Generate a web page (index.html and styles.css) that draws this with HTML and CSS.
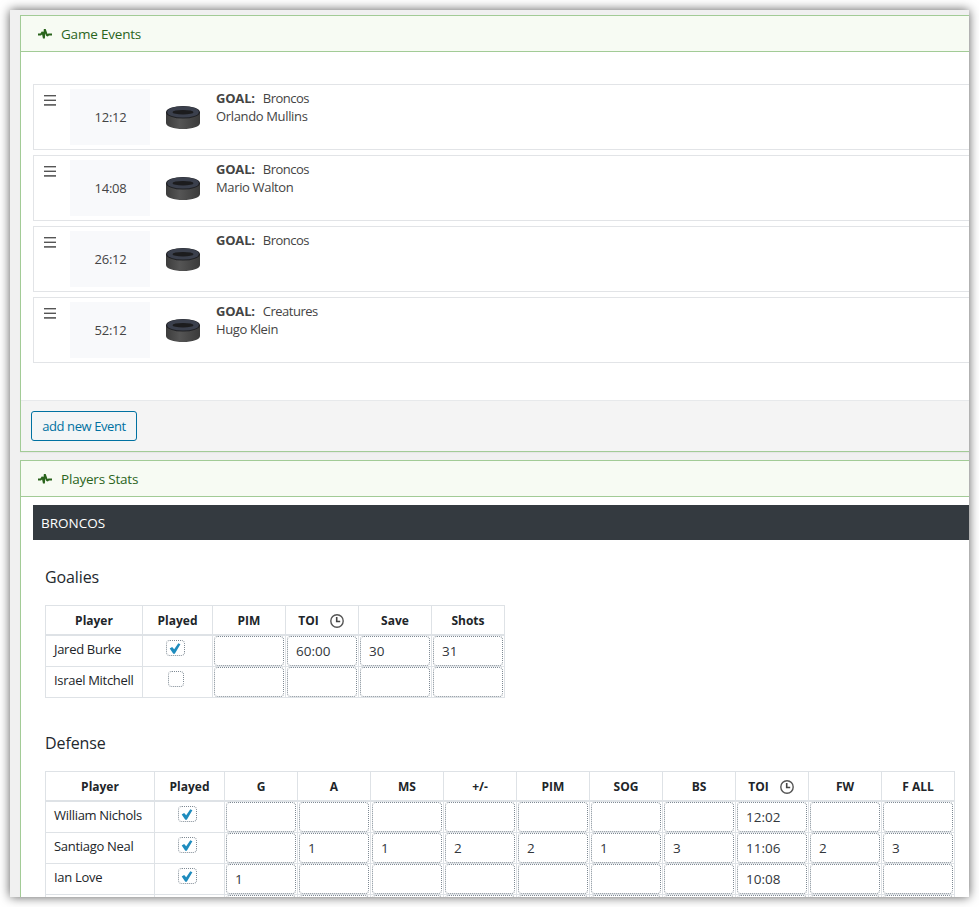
FILE: index.html
```html
<!DOCTYPE html>
<html lang="en">
<head>
<meta charset="utf-8">
<title>Game Events</title>
<link rel="stylesheet" href="styles.css">
</head>
<body>
<svg width="0" height="0" class="defs">
  <defs>
    <linearGradient id="puckSide" x1="0" x2="1" y1="0" y2="0"><stop offset="0" stop-color="#3c3c3c"/><stop offset=".4" stop-color="#555"/><stop offset="1" stop-color="#3a3a3a"/></linearGradient>
    <symbol id="pulse" viewBox="0 0 14 12"><path d="M0 6.500h2.800L4.500 4l1.400 6.300L6.800 1.200l2.400 6.600 1.400-1.300H14" fill="none" stroke="#2a641c" stroke-width="1.900" stroke-linejoin="bevel"/></symbol>
    <symbol id="puck" viewBox="0 0 34 23"><path d="M0 6v11c0 3.500 7.500 6 17 6s17-2.500 17-6V6z" fill="url(#puckSide)"/><ellipse cx="17" cy="6.300" rx="17" ry="6.300" fill="#202124"/><ellipse cx="17" cy="5.900" rx="15.800" ry="5.700" fill="#3b404d"/><ellipse cx="17" cy="6.200" rx="10.500" ry="2.300" fill="#1c1c1e"/></symbol>
    <symbol id="clock" viewBox="0 0 14 14"><circle cx="7" cy="7" r="6.200" fill="none" stroke="#555" stroke-width="1.400"/><path d="M6.700 3v4.500H10.200" fill="none" stroke="#444" stroke-width="1.600"/></symbol>
    <symbol id="check" viewBox="0 0 12 11"><path d="M.7 5.600l2.400-1.700 2.100 2.400L9.300.2l2.100 1.100-5.600 9.400H4.300z" fill="#1e8cbe"/></symbol>
  </defs>
</svg>
<main class="frame">
  <section class="panel events-panel">
    <h2 class="panel-head"><svg class="pulse"><use href="#pulse"/></svg><span>Game Events</span></h2>
    <div class="events" id="events"></div>
    <footer class="panel-foot"><button class="add">add new Event</button></footer>
  </section>
  <section class="panel">
    <h2 class="panel-head"><svg class="pulse"><use href="#pulse"/></svg><span>Players Stats</span></h2>
    <div class="team"><span>BRONCOS</span></div>
    <div class="stats" id="stats"></div>
  </section>
</main>
<script src="app.js"></script>
</body>
</html>
```
FILE: styles.css
```css
* { box-sizing: border-box; }
body { margin: 0; padding: 10px; height: 907px; overflow: hidden; background: #fff; font: 13px/18px "Open Sans", "Noto Sans", sans-serif; color: #444; }
.defs { position: absolute; }
.frame { width: 959px; height: 887px; padding: 5px 0 0 10px; overflow: hidden; background: #f0f0f0; box-shadow: 0 0 10px rgba(0, 0, 0, .65); }
.panel { border: 1px solid #a2cb96; border-right: 0; background: #fff; margin-bottom: 8px; box-shadow: 0 1px 1px rgba(0, 0, 0, .04); }
.events-panel { height: 437px; display: flex; flex-direction: column; }
.panel-head { margin: 0; height: 36px; flex: none; display: flex; align-items: center; gap: 9px; padding-left: 17px; background: #f7fbf3; border-bottom: 1px solid #a2cb96; font-size: 13.500px; font-weight: 400; color: #2a641c; }
.panel-head span { letter-spacing: -.2px; }
.pulse { width: 14px; height: 12px; }
.events { flex: 1; padding: 32px 0 0 12px; display: flex; flex-direction: column; gap: 5px; }
.event { height: 66px; border: 1px solid #e2e4e7; border-right: 0; display: flex; padding: 4px 0 0 10px; }
.grip { width: 12px; height: 11px; margin: 6px 14px 0 0; background: linear-gradient(#555 0 1px, #bbb 1px 2px, transparent 2px 4px, #bbb 4px 5px, #555 5px 6px, transparent 6px 9px, #666 9px 10px, #888 10px); }
.time { width: 80px; height: 56px; background: #f8f9fb; display: flex; align-items: center; justify-content: center; letter-spacing: -.2px; padding: 0 0 1px 1px; }
.puck { width: 34px; height: 23px; margin: 17px 17px 0 16px; }
.goal { margin-left: -1px; letter-spacing: -.35px; }
.goal b { margin-right: 8px; letter-spacing: -.2px; }
.goal .team-name { letter-spacing: -.5px; }
.panel-foot { height: 51px; border-top: 1px solid #e7e9eb; background: #f4f4f4; padding: 10px; }
.add { display: block; width: 106px; height: 30px; padding: 0; border: 1px solid #0071a1; border-radius: 3px; background: #f3f5f6; color: #0071a1; font: inherit; letter-spacing: -.4px; }
.team { height: 35px; margin: 8px 0 0 12px; padding: 0 8px; background: #343a40; color: #fff; display: flex; align-items: center; font-size: 13.500px; }
.stats { padding: 0 0 0 24px; }
.stats h3 { margin: 0; font-size: 16px; font-weight: 500; letter-spacing: -.1px; line-height: 20px; color: #23282d; padding-top: 27px; height: 65px; }
.grid { display: grid; width: max-content; border-left: 1px solid #dee2e6; border-top: 1px solid #dee2e6; margin-bottom: 8px; color: #212529; }
.grid > div { border-right: 1px solid #dee2e6; border-bottom: 1px solid #dee2e6; height: 31px; display: flex; }
.grid > .th { height: 30px; border-bottom-width: 2px; align-items: center; justify-content: center; font-size: 12px; font-weight: 700; gap: 12px; padding-top: 2px; }
.clock { width: 14px; height: 14px; margin-right: 2px; margin-left: -1px; }
.name { padding: 4px 0 0 8px; white-space: nowrap; letter-spacing: -.3px; }
.input { width: 70px; height: 30px; margin-left: 1px; border: 1px dotted #7e8993; border-radius: 4px; padding: 5px 8px 0; font-size: 13.500px; color: #32373c; }
.box { width: 16px; height: 16px; margin: 4px 0 0 25px; border: 1px dotted #7e8993; border-radius: 4px; }
.box.on { width: 19px; margin-left: 23px; padding: 2px 0 0 2px; }
.box svg { display: block; width: 12px; height: 11px; }
```
FILE: app.js
```js
const events = [
  ["12:12", "Broncos", "Orlando Mullins"],
  ["14:08", "Broncos", "Mario Walton"],
  ["26:12", "Broncos", ""],
  ["52:12", "Creatures", "Hugo Klein"]
];
document.getElementById("events").innerHTML = events.map(([time, team, player]) =>
  `<div class="event"><i class="grip"></i><div class="time">${time}</div><svg class="puck"><use href="#puck"/></svg><div class="goal"><b>GOAL:</b><span class="team-name">${team}</span><br><span>${player}</span></div></div>`).join("");

const tables = [
  { title: "Goalies", first: 97, cols: ["PIM", "TOI", "Save", "Shots"], rows: [
    ["Jared Burke", true, "", "60:00", "30", "31"],
    ["Israel Mitchell", false, "", "", "", ""]
  ] },
  { title: "Defense", first: 109, cols: ["G", "A", "MS", "+/-", "PIM", "SOG", "BS", "TOI", "FW", "F ALL"], rows: [
    ["William Nichols", true, "", "", "", "", "", "", "", "12:02", "", ""],
    ["Santiago Neal", true, "", "1", "1", "2", "2", "1", "3", "11:06", "2", "3"],
    ["Ian Love", true, "1", "", "", "", "", "", "", "10:08", "", ""],
    ["", false, "", "", "", "", "", "", "", "", "", ""]
  ] }
];
const head = t => `<div class="th"><span>${t}</span>${t === "TOI" ? '<svg class="clock"><use href="#clock"/></svg>' : ""}</div>`;
const row = ([name, on, ...vals]) =>
  `<div><span class="name">${name}</span></div><div><span class="box${on ? " on" : ""}">${on ? '<svg><use href="#check"/></svg>' : ""}</span></div>` +
  vals.map(v => `<div><span class="input">${v}</span></div>`).join("");
document.getElementById("stats").innerHTML = tables.map(t =>
  `<h3>${t.title}</h3><div class="grid" style="grid-template-columns:${t.first}px 70px repeat(${t.cols.length},73px)">` +
  ["Player", "Played", ...t.cols].map(head).join("") + t.rows.map(row).join("") + "</div>").join("");
```
